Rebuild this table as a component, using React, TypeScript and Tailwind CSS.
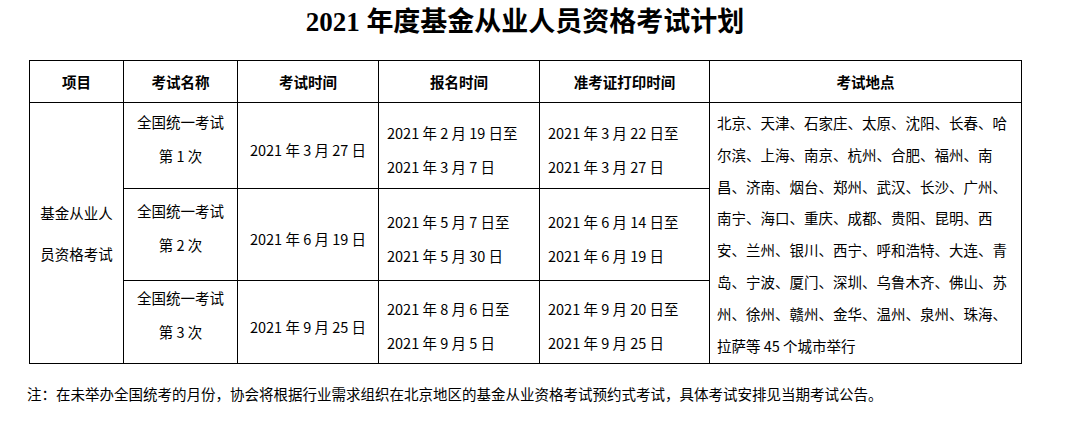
const places = [
  "北京、天津、石家庄、太原、沈阳、长春、哈",
  "尔滨、上海、南京、杭州、合肥、福州、南",
  "昌、济南、烟台、郑州、武汉、长沙、广州、",
  "南宁、海口、重庆、成都、贵阳、昆明、西",
  "安、兰州、银川、西宁、呼和浩特、大连、青",
  "岛、宁波、厦门、深圳、乌鲁木齐、佛山、苏",
  "州、徐州、赣州、金华、温州、泉州、珠海、",
  "拉萨等 45 个城市举行",
];

const rounds = [
  {
    n: 1,
    date: "2021 年 3 月 27 日",
    signup: ["2021 年 2 月 19 日至", "2021 年 3 月 7 日"],
    ticket: ["2021 年 3 月 22 日至", "2021 年 3 月 27 日"],
    h: "h-[86px]",
  },
  {
    n: 2,
    date: "2021 年 6 月 19 日",
    signup: ["2021 年 5 月 7 日至", "2021 年 5 月 30 日"],
    ticket: ["2021 年 6 月 14 日至", "2021 年 6 月 19 日"],
    h: "h-[92px]",
  },
  {
    n: 3,
    date: "2021 年 9 月 25 日",
    signup: ["2021 年 8 月 6 日至", "2021 年 9 月 5 日"],
    ticket: ["2021 年 9 月 20 日至", "2021 年 9 月 25 日"],
    h: "h-[78px]",
  },
];

const headers = ["项目", "考试名称", "考试时间", "报名时间", "准考证打印时间", "考试地点"];

export default function App() {
  return (
    <div className="w-[1068px] h-[427px] bg-white text-black font-['Noto_Sans_CJK_SC',sans-serif] text-[14.5px]">
      <div className="ml-[29px] w-[992px]">
        <h1 className="pt-[4px] h-[60px] text-center text-[27px] leading-[36px] font-semibold font-['Liberation_Serif','Noto_Sans_CJK_SC',serif]">
          2021 年度基金从业人员资格考试计划
        </h1>
        <table className="table-fixed border-collapse w-[993px]">
          <colgroup>
            <col className="w-[94px]" />
            <col className="w-[114px]" />
            <col className="w-[141px]" />
            <col className="w-[161px]" />
            <col className="w-[170px]" />
            <col className="w-[312px]" />
          </colgroup>
          <thead>
            <tr className="h-[42px]">
              {headers.map((t) => (
                <th key={t} className="border border-black p-0 text-center font-bold leading-[20px]">
                  {t}
                </th>
              ))}
            </tr>
          </thead>
          <tbody>
            {rounds.map((r, i) => (
              <tr key={r.n} className={r.h}>
                {i === 0 && (
                  <td rowSpan={3} className="border border-black p-0 text-center align-middle leading-[41px]">
                    基金从业人
                    <br />
                    员资格考试
                  </td>
                )}
                <td className="border border-black p-0 pb-[14px] text-center align-middle leading-[34px]">
                  全国统一考试
                  <br />第 {r.n} 次
                </td>
                <td className="border border-black p-0 pt-[9px] text-center align-middle leading-[20px]">
                  {r.date}
                </td>
                <td className="border border-black p-0 pl-[8px] pt-[8px] text-left align-middle leading-[34px] whitespace-nowrap">
                  {r.signup[0]}
                  <br />
                  {r.signup[1]}
                </td>
                <td className="border border-black p-0 pl-[8px] pt-[8px] text-left align-middle leading-[34px] whitespace-nowrap">
                  {r.ticket[0]}
                  <br />
                  {r.ticket[1]}
                </td>
                {i === 0 && (
                  <td rowSpan={3} className="border border-black p-0 align-top">
                    <div className="h-[255px] pl-[7px] pt-[4px] leading-[31.8px] whitespace-nowrap">
                      {places.map((p, k) => (
                        <div key={k}>{p}</div>
                      ))}
                    </div>
                  </td>
                )}
              </tr>
            ))}
          </tbody>
        </table>
      </div>
      <p className="mt-[20px] ml-[27px] leading-[20px]">
        注：在未举办全国统考的月份，协会将根据行业需求组织在北京地区的基金从业资格考试预约式考试，具体考试安排见当期考试公告。
      </p>
    </div>
  );
}
